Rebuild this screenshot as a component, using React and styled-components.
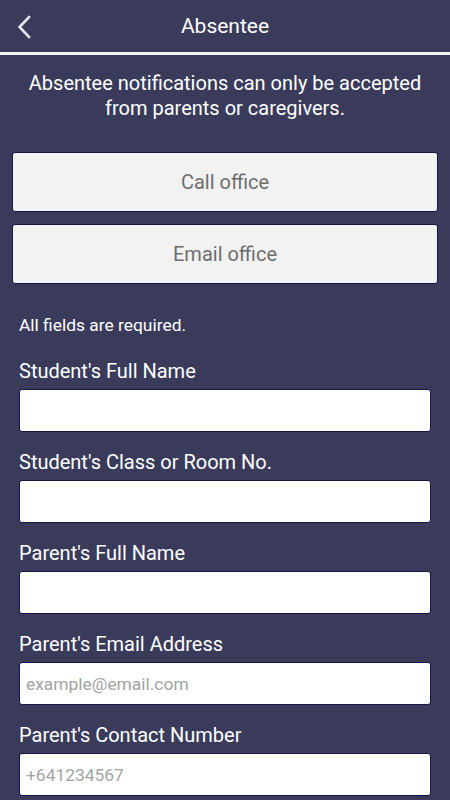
import React from 'react';
import styled, { createGlobalStyle } from 'styled-components';

const GlobalStyle = createGlobalStyle`
    html, body {
        margin: 0;
        padding: 0;
        background-color: #3a3b5b;
    }
    body {
        font-family: Roboto, "Noto Sans", sans-serif;
    }
    * {
        box-sizing: border-box;
    }
`;

const Screen = styled.div`
    width: 450px;
    min-height: 800px;
    background-color: #3a3b5b;
    color: #fff;
    overflow: hidden;
`;

const Header = styled.header`
    height: 52px;
    display: flex;
    align-items: center;
    justify-content: center;
    position: relative;
    border-bottom: 3px solid #f4f4f6;
    box-sizing: content-box;
`;

const BackButton = styled.button`
    position: absolute;
    left: 12px;
    top: 13px;
    width: 24px;
    height: 28px;
    padding: 0;
    border: none;
    background: none;
    display: flex;
    align-items: center;
    justify-content: center;
    cursor: pointer;
`;

const Title = styled.h1`
    margin: 0;
    font-size: 21px;
    font-weight: 400;
    color: #fff;
    line-height: 1;
`;

const Intro = styled.p`
    margin: 16px 0 0;
    padding: 0 10px;
    text-align: center;
    font-size: 20px;
    line-height: 25px;
    color: #fff;
`;

const Actions = styled.div`
    display: flex;
    flex-direction: column;
    gap: 12px;
    margin: 31px 12px 0;
`;

const OfficeButton = styled.button`
    height: 60px;
    width: 100%;
    background-color: #f2f2f2;
    border: 1px solid #14154a;
    border-radius: 3px;
    color: #6e6e6e;
    font-family: Roboto, sans-serif;
    font-size: 20px;
    cursor: pointer;
`;

const Form = styled.form`
    padding: 31px 19px 0;
`;

const Note = styled.p`
    margin: 0 0 24px;
    font-size: 17.4px;
    line-height: 20px;
    color: #fff;
`;

const Field = styled.div`
    display: flex;
    flex-direction: column;
    margin-bottom: 18px;
`;

const Label = styled.label`
    font-size: 20px;
    line-height: 24px;
    color: #fff;
    margin-bottom: 6px;
`;

const Input = styled.input`
    height: 43px;
    width: 100%;
    background-color: #fff;
    border: 1px solid #14154a;
    border-radius: 3px;
    padding: 0 6px;
    font-family: Roboto, sans-serif;
    font-size: 17.4px;
    color: #333;
    outline: none;

    &::placeholder {
        color: #a3a3a3;
    }
`;

const fields = [
    { id: 'studentName', label: "Student's Full Name" },
    { id: 'studentClass', label: "Student's Class or Room No." },
    { id: 'parentName', label: "Parent's Full Name" },
    { id: 'parentEmail', label: "Parent's Email Address", placeholder: 'example@email.com', type: 'email' },
    { id: 'parentPhone', label: "Parent's Contact Number", placeholder: '+641234567', type: 'tel' },
];

const Chevron = () => (
    <svg width="16" height="24" viewBox="0 0 16 24" fill="none">
        <path d="M13 2 L3.5 12 L13 22" stroke="#e4e4ea" strokeWidth="2.6" strokeLinecap="square" />
    </svg>
);

const App = () => {
    return (
        <Screen>
            <GlobalStyle />
            <Header>
                <BackButton aria-label="Back">
                    <Chevron />
                </BackButton>
                <Title>Absentee</Title>
            </Header>
            <Intro>
                Absentee notifications can only be accepted
                <br />
                from parents or caregivers.
            </Intro>
            <Actions>
                <OfficeButton type="button">Call office</OfficeButton>
                <OfficeButton type="button">Email office</OfficeButton>
            </Actions>
            <Form onSubmit={(e) => e.preventDefault()}>
                <Note>All fields are required.</Note>
                {fields.map((f) => (
                    <Field key={f.id}>
                        <Label htmlFor={f.id}>{f.label}</Label>
                        <Input id={f.id} type={f.type || 'text'} placeholder={f.placeholder} />
                    </Field>
                ))}
            </Form>
        </Screen>
    );
}

export default App;
